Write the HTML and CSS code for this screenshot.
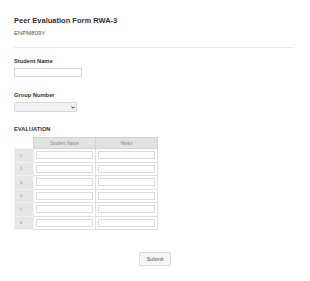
FILE: index.html
```html
<!DOCTYPE html>
<html lang="en">
<head>
    <meta charset="UTF-8">
    <meta name="viewport" content="width=device-width, initial-scale=1.0">
    <title>Peer Evaluation Form RWA-3</title>
    <link rel="stylesheet" href="styles.css">
</head>
<body>
    <div class="form-container">
        <h1 class="form-title">Peer Evaluation Form RWA-3</h1>
        <div class="form-code">ENPM809Y</div>
        <hr class="form-divider">

        <label class="field-label" for="student-name">Student Name</label>
        <input type="text" id="student-name" class="text-input">

        <label class="field-label group-label" for="group-number">Group Number</label>
        <div class="select-wrap">
            <select id="group-number" class="select-input">
                <option></option>
            </select>
            <svg class="select-arrow" width="4" height="3" viewBox="0 0 4 3">
                <path d="M0.4 0.5 L2 2.2 L3.6 0.5" fill="none" stroke="#333" stroke-width="0.9"/>
            </svg>
        </div>

        <div class="section-label">EVALUATION</div>
        <table class="eval-table">
            <thead>
                <tr>
                    <th class="blank"></th>
                    <th>Student Name</th>
                    <th>Marks</th>
                </tr>
            </thead>
            <tbody>
                <tr><td class="row-num">1</td><td><input type="text" class="cell-input"></td><td><input type="text" class="cell-input"></td></tr>
                <tr><td class="row-num">2</td><td><input type="text" class="cell-input"></td><td><input type="text" class="cell-input"></td></tr>
                <tr><td class="row-num">3</td><td><input type="text" class="cell-input"></td><td><input type="text" class="cell-input"></td></tr>
                <tr><td class="row-num">4</td><td><input type="text" class="cell-input"></td><td><input type="text" class="cell-input"></td></tr>
                <tr><td class="row-num">5</td><td><input type="text" class="cell-input"></td><td><input type="text" class="cell-input"></td></tr>
                <tr><td class="row-num">6</td><td><input type="text" class="cell-input"></td><td><input type="text" class="cell-input"></td></tr>
            </tbody>
        </table>

        <div class="submit-row">
            <button class="submit-btn">Submit</button>
        </div>
    </div>
</body>
</html>
```

FILE: styles.css
```css
* {
    box-sizing: border-box;
}
body {
    margin: 0;
    background-color: #fff;
    font-family: "Liberation Sans", Arial, sans-serif;
    color: #333;
}
.form-container {
    padding: 17px 16px 0 14px;
}
.form-title {
    margin: 0;
    font-size: 7.5px;
    line-height: 7.5px;
    font-weight: bold;
    color: #333;
}
.form-code {
    margin-top: 5.7px;
    font-size: 6px;
    line-height: 6px;
    color: #555;
}
.form-divider {
    margin: 10.8px 0 0 0;
    height: 0;
    border: none;
    border-top: 1px solid #ebebeb;
}
.field-label {
    display: block;
    margin-top: 11.3px;
    font-size: 5.75px;
    line-height: 5.75px;
    font-weight: bold;
    color: #333;
}
.group-label {
    margin-top: 16.3px;
}
.text-input {
    display: block;
    margin: 3px 0 0 0;
    width: 68px;
    height: 9px;
    padding: 0;
    border: 1px solid #d6d6d6;
    background: #fff;
}
.select-wrap {
    position: relative;
    margin-top: 3px;
    width: 63px;
    height: 10px;
}
.select-input {
    display: block;
    width: 63px;
    height: 10px;
    margin: 0;
    padding: 0;
    border: 1px solid #dadada;
    border-radius: 1px;
    background: #f1f1f1;
    appearance: none;
    -webkit-appearance: none;
}
.select-arrow {
    position: absolute;
    left: 57px;
    top: 4px;
}
.section-label {
    margin-top: 15.3px;
    font-size: 5.75px;
    line-height: 5.75px;
    color: #333;
    font-weight: 600;
}
.eval-table {
    margin-top: 4px;
    border-collapse: collapse;
    table-layout: fixed;
    width: 144px;
}
.eval-table th {
    height: 11px;
    padding: 0;
    background: #e2e2e2;
    border: 1px solid #d4d4d4;
    font-size: 4.5px;
    font-weight: normal;
    color: #8a8a8a;
}
.eval-table th.blank {
    width: 19px;
    background: #fff;
    border: none;
}
.eval-table th:nth-child(2) {
    width: 62px;
}
.eval-table td {
    height: 13.5px;
    padding: 0 2px;
    border: 1px solid #e0e0e0;
    vertical-align: middle;
}
.eval-table td.row-num {
    padding-left: 5px;
    background: #e6e6e6;
    border-color: #f2f2f2;
    font-size: 4px;
    color: #8e8e8e;
}
.cell-input {
    display: block;
    width: 100%;
    height: 8px;
    margin: 0;
    padding: 0;
    border: 1px solid #dcdcdc;
    background: #fff;
}
.submit-row {
    display: flex;
    justify-content: center;
    margin-top: 22px;
    padding-left: 2px;
}
.submit-btn {
    width: 32px;
    height: 14px;
    padding: 0;
    border: 1px solid #dcdcdc;
    border-radius: 1px;
    background: #f6f6f6;
    box-shadow: 0 1px 1px rgba(0, 0, 0, 0.06);
    font-family: "Liberation Sans", Arial, sans-serif;
    font-size: 5.5px;
    color: #555;
}
```
